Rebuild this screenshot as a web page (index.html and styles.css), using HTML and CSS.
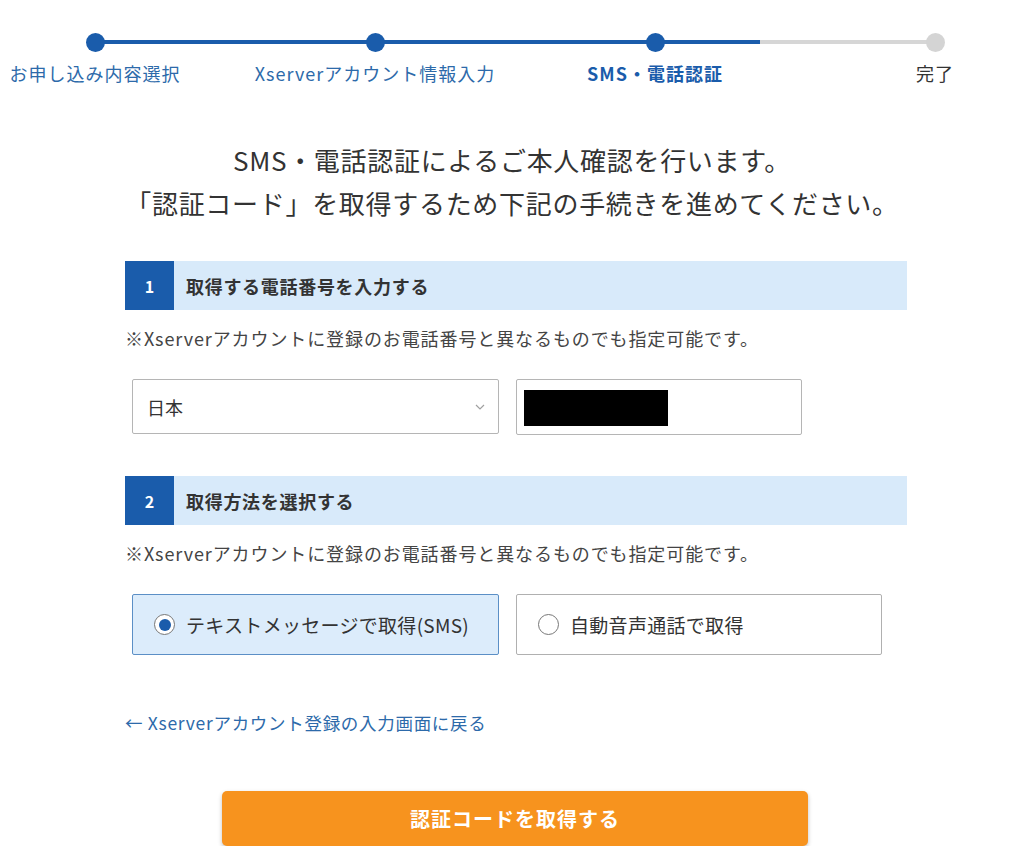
FILE: index.html
```html
<!doctype html>
<html lang="ja">
  <head>
    <meta charset="UTF-8">
    <meta name="viewport" content="width=device-width, initial-scale=1.0">
    <title>SMS・電話認証</title>
    <link rel="stylesheet" href="styles.css">
  </head>
  <body>
    <!-- Progress steps -->
    <ol class="steps">
      <li class="step done"><span class="dot"></span><span class="label">お申し込み内容選択</span></li>
      <li class="step done"><span class="dot"></span><span class="label">Xserverアカウント情報入力</span></li>
      <li class="step current"><span class="dot"></span><span class="label">SMS・電話認証</span></li>
      <li class="step"><span class="dot"></span><span class="label">完了</span></li>
    </ol>

    <p class="lead">SMS・電話認証によるご本人確認を行います。<br>「認証コード」を取得するため下記の手続きを進めてください。</p>

    <div class="container">
      <!-- Step 1 -->
      <div class="section-head">
        <span class="num">1</span>
        <span class="title">取得する電話番号を入力する</span>
      </div>
      <p class="note">※Xserverアカウントに登録のお電話番号と異なるものでも指定可能です。</p>
      <div class="phone-row">
        <div class="select-wrap">
          <select class="country">
            <option>日本</option>
          </select>
          <svg class="chevron" width="10" height="6" viewBox="0 0 10 6"><path d="M1 1l4 4 4-4" fill="none" stroke="#a0a0a0" stroke-width="1.2"/></svg>
        </div>
        <div class="field"><span class="redacted"></span></div>
      </div>

      <!-- Step 2 -->
      <div class="section-head second">
        <span class="num">2</span>
        <span class="title">取得方法を選択する</span>
      </div>
      <p class="note">※Xserverアカウントに登録のお電話番号と異なるものでも指定可能です。</p>
      <div class="method-row">
        <label class="method selected"><span class="radio"></span>テキストメッセージで取得(SMS)</label>
        <label class="method wide"><span class="radio"></span>自動音声通話で取得</label>
      </div>

      <a class="back" href="#">← Xserverアカウント登録の入力画面に戻る</a>
    </div>

    <div class="actions">
      <button type="button" class="submit">認証コードを取得する</button>
    </div>
  </body>
</html>
```

FILE: styles.css
```css
body {
  margin: 0;
  font-family: "Noto Sans CJK JP", "Noto Sans", sans-serif;
  color: #333;
  background: #fff;
}

/* progress steps */
.steps {
  list-style: none;
  margin: 0;
  padding: 33px 0 0 5px;
  display: grid;
  grid-template-columns: repeat(4, 180px);
  column-gap: 100px;
  position: relative;
}
.steps::before {
  content: "";
  position: absolute;
  top: 40px;
  left: 95px;
  width: 840px;
  height: 4px;
  background: linear-gradient(to right, #1a5cab 665px, #d6d6d6 665px);
}
.step {
  display: flex;
  flex-direction: column;
  align-items: center;
  position: relative;
}
.dot {
  width: 19px;
  height: 19px;
  border-radius: 50%;
  background: #d4d4d4;
}
.step.done .dot,
.step.current .dot {
  background: #1a5cab;
}
.label {
  margin-top: 9px;
  font-size: 18px;
  letter-spacing: 1px;
  line-height: 24px;
  white-space: nowrap;
  color: #333;
}
.step.done .label {
  color: #2d6aaa;
}
.step.current .label {
  color: #1a5cab;
  font-weight: bold;
}

/* lead text */
.lead {
  margin: 53px 0 0;
  text-align: center;
  font-size: 26px;
  letter-spacing: 0.7px;
  line-height: 43px;
  color: #333;
}

.container {
  width: 782px;
  margin: 37px 0 0 125px;
}

.section-head {
  display: flex;
  align-items: center;
  height: 49px;
  background: #d8eafa;
}
.section-head.second {
  margin-top: 41px;
}
.num {
  width: 49px;
  height: 49px;
  display: flex;
  align-items: center;
  justify-content: center;
  background: #1a5cab;
  color: #fff;
  font-weight: bold;
  font-size: 16px;
}
.title {
  margin-left: 12px;
  font-size: 18px;
  letter-spacing: 0.7px;
  font-weight: bold;
  color: #333;
}

.note {
  margin: 16px 0 0;
  font-size: 18px;
  letter-spacing: 0.9px;
  line-height: 24px;
  color: #444;
}

/* phone inputs */
.phone-row {
  display: flex;
  gap: 17px;
  margin: 29px 0 0 7px;
}
.select-wrap {
  position: relative;
  width: 367px;
}
.country {
  width: 100%;
  height: 55px;
  padding: 0 14px;
  border: 1px solid #b5b5b5;
  border-radius: 2px;
  background: #fff;
  font-family: inherit;
  font-size: 18px;
  color: #333;
  appearance: none;
  -webkit-appearance: none;
}
.chevron {
  position: absolute;
  right: 14px;
  top: 25px;
}
.field {
  width: 286px;
  height: 56px;
  box-sizing: border-box;
  border: 1px solid #b5b5b5;
  border-radius: 2px;
  display: flex;
  align-items: center;
  padding-left: 7px;
}
.redacted {
  width: 144px;
  height: 36px;
  margin-top: 2px;
  background: #000;
}

/* method radios */
.method-row {
  display: flex;
  gap: 17px;
  margin: 29px 0 0 7px;
}
.method {
  width: 367px;
  height: 61px;
  box-sizing: border-box;
  display: flex;
  align-items: center;
  padding-left: 21px;
  border: 1px solid #b0b0b0;
  border-radius: 2px;
  background: #fff;
  font-size: 19px;
  letter-spacing: 0.3px;
  color: #333;
}
.method.selected {
  background: #dcecfb;
  border-color: #5b8fc6;
}
.method.wide {
  width: 366px;
}
.radio {
  width: 21px;
  height: 21px;
  box-sizing: border-box;
  border: 1.5px solid #777;
  border-radius: 50%;
  margin-right: 11px;
  display: flex;
  align-items: center;
  justify-content: center;
  background: #fff;
}
.method.selected .radio::after {
  content: "";
  width: 12px;
  height: 12px;
  border-radius: 50%;
  background: #1a5cab;
}

.back {
  display: inline-block;
  margin-top: 56px;
  font-size: 17.5px;
  letter-spacing: 0.7px;
  line-height: 24px;
  color: #2d6aaa;
  text-decoration: none;
}

.actions {
  margin-top: 56px;
  padding-left: 222px;
}
.submit {
  width: 586px;
  height: 55px;
  border: none;
  border-radius: 5px;
  background: #f7931e;
  color: #fff;
  font-family: inherit;
  font-size: 20px;
  letter-spacing: 1px;
  font-weight: bold;
  box-shadow: 0 2px 4px rgba(0, 0, 0, 0.25);
  cursor: pointer;
}
```
